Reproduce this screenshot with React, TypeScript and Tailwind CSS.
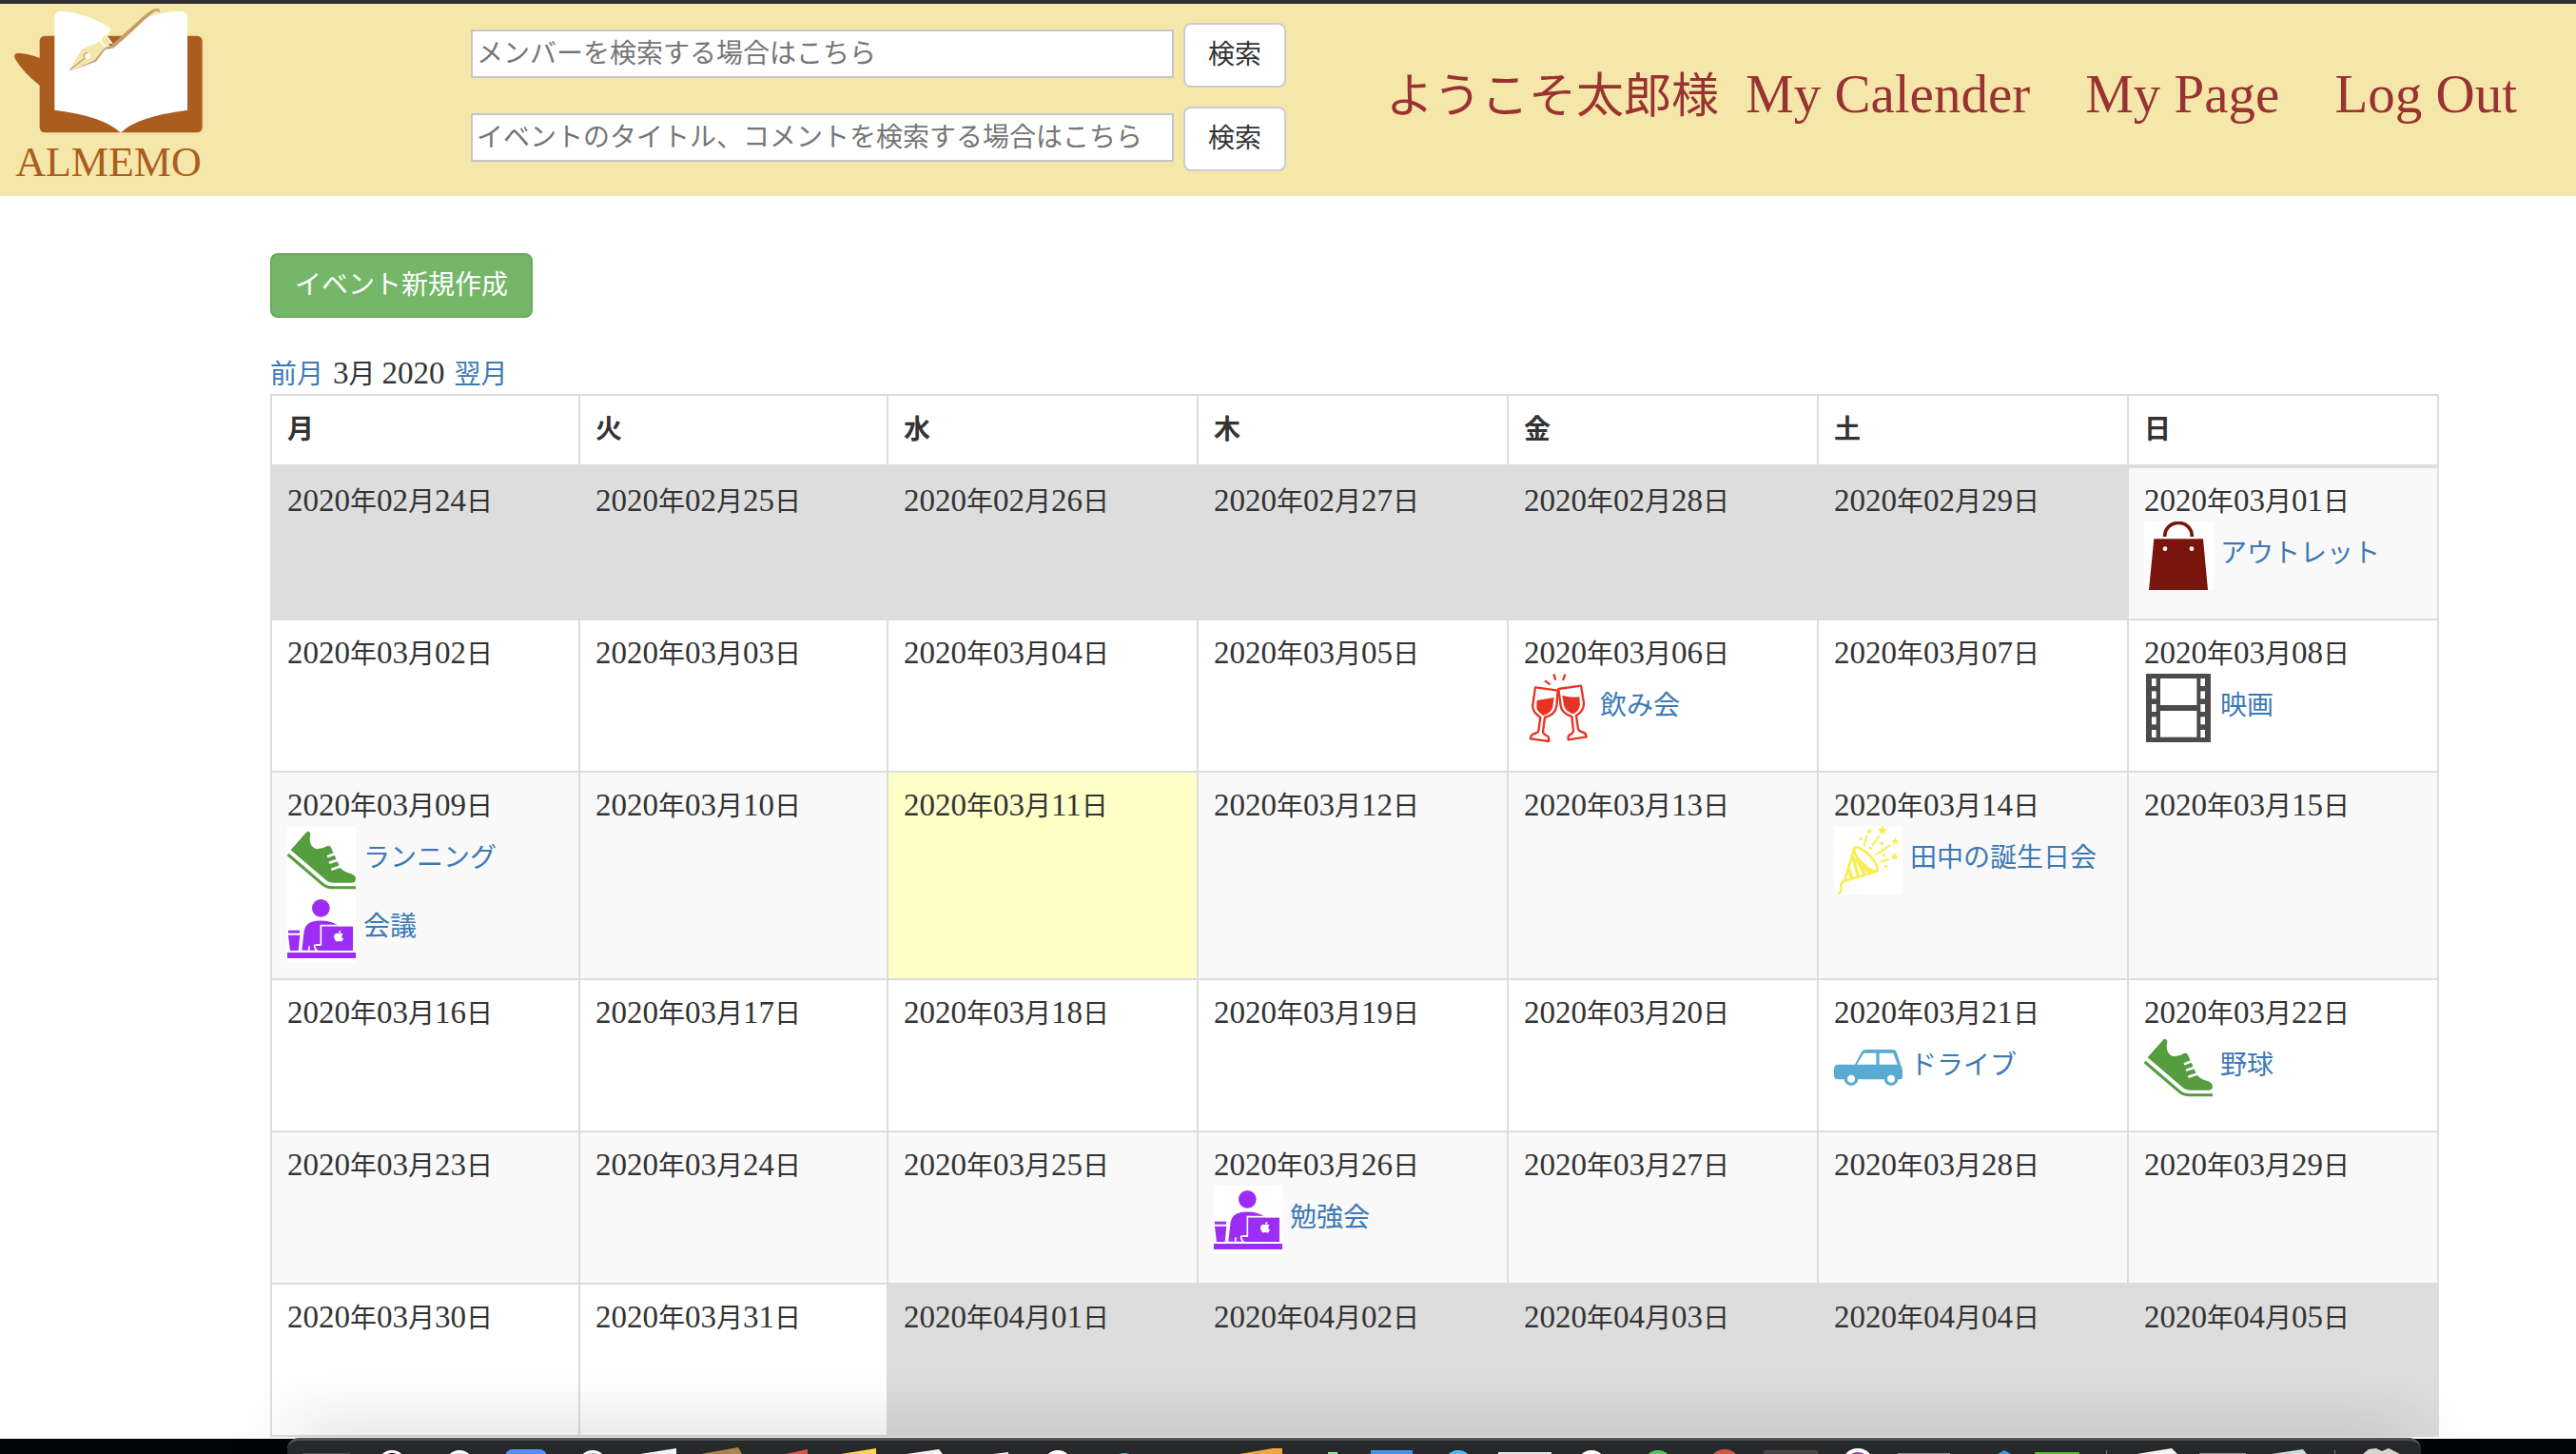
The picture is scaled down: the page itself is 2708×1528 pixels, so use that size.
import React from "react";
import { FaApple } from "react-icons/fa";

type IconName = "bag" | "glasses" | "film" | "shoe" | "meeting" | "party" | "car";
type Event = { icon: IconName; title: string };
type Day = { date: string; tone: "other" | "normal" | "today"; events?: Event[] };

/* Latin letters and digits are set a step larger than the Japanese text around them. */
function Mixed({ text, big = false }: { text: string; big?: boolean }) {
  return (
    <>
      {text.split(/([0-9A-Za-z]+(?: [0-9A-Za-z]+)*)/).map((part, i) =>
        i % 2 === 1 ? (
          <span key={i} className={big ? "text-[57px] leading-none" : "text-[33px] leading-none"}>
            {part}
          </span>
        ) : (
          <React.Fragment key={i}>{part}</React.Fragment>
        )
      )}
    </>
  );
}

const STAR =
  "M0 -10 L2.9 -3.6 L9.5 -3.1 L4.5 1.5 L5.9 8.1 L0 4.6 L-5.9 8.1 L-4.5 1.5 L-9.5 -3.1 L-2.9 -3.6 Z";

function EventIcon({ name }: { name: IconName }) {
  return (
    <svg viewBox="0 0 216 216" className="size-[72px] shrink-0 bg-white" aria-hidden="true">
      {name === "bag" && (
        <>
          <path d="M65 48 C65 -10 151 -10 151 48" fill="none" stroke="#7a150d" strokeWidth="11" />
          <path d="M31 55 H186 L201 216 H15 Z" fill="#7a150d" />
          <circle cx="66" cy="86" r="7" fill="#fff" />
          <circle cx="150" cy="86" r="7" fill="#fff" />
        </>
      )}
      {name === "film" && (
        <>
          <rect x="6" width="204" height="216" fill="#4b4b4b" />
          <rect x="51" y="15" width="115" height="84" fill="#fff" />
          <rect x="51" y="117" width="115" height="83" fill="#fff" />
          {[15, 55, 96, 136, 177].map((y) => (
            <g key={y} fill="#fff">
              <rect x="24" y={y} width="14" height="24" />
              <rect x="178" y={y} width="14" height="24" />
            </g>
          ))}
        </>
      )}
      {name === "glasses" && (
        <g stroke="#e83323" strokeWidth="7" strokeLinejoin="round" fill="none">
          <path d="M36 43 L107 53 L103 103 Q98 130 66 138 L60 183 Q62 192 76 198 Q80 202 78 213 L21 205 Q21 195 28 191 Q43 187 46 181 L52 138 Q24 118 28 97 Z" />
          <path d="M109 48 L180 38 L189 92 Q190 118 165 132 L171 174 Q174 182 188 185 Q196 189 197 199 L140 208 Q138 197 144 193 Q156 187 156 180 L151 135 Q120 125 116 102 Z" />
          <path d="M41 84 L95 75 L91 105 Q86 124 62 132 Q38 118 40 102 Z" fill="#e83323" stroke="none" />
          <path d="M121 68 Q150 77 175 73 L177 98 Q174 118 155 127 Q130 118 126 100 Z" fill="#e83323" stroke="none" />
          <path d="M66 22 L83 34 M94 1 L100 20 M130 2 L123 21" strokeWidth="7" />
        </g>
      )}
      {name === "shoe" && (
        <>
          <path
            d="M11 76 L60 20 Q66 14 72 22 Q74 26 71 38 Q70 62 88 71 Q110 74 126 63 Q132 60 137 66 L166 130 Q174 144 202 151 Q216 156 216 167 Q215 179 202 179 H148 Q130 179 118 167 Z"
            fill="#559d3e"
          />
          <path d="M2 90 L112 184 Q124 194 142 194 H216" fill="none" stroke="#559d3e" strokeWidth="9" />
          <path d="M126 97 L150 88 M132 116 L159 107 M139 137 L170 127" stroke="#fff" strokeWidth="8" />
        </>
      )}
      {name === "meeting" && (
        <>
          <g fill="#9b2df5">
            <circle cx="106" cy="43" r="28" />
            <path d="M46 176 L52 122 Q55 86 92 83 Q135 80 162 98 V176 Z" />
            <rect x="3" y="113" width="36" height="9" />
            <path d="M3 128 H40 L35 177 H9 Z" />
            <rect y="183" width="216" height="18" />
          </g>
          <path d="M68 176 Q68 168 70 163 M105 159 H91 Q84 158 86 165 Q90 177 96 178" fill="none" stroke="#fff" strokeWidth="5" />
          <path d="M109 100 H208 V177 H98 Q91 171 91 163 H109 Z" fill="#9b2df5" />
          <path d="M91 159 H106 V98 H210 V179" fill="none" stroke="#fff" strokeWidth="5" />
          <FaApple x={142} y={111} width={38} height={42} size={40} color="#fff" />
        </>
      )}
      {name === "party" && (
        <g stroke="#f7ef4d" strokeWidth="6" fill="none" strokeLinecap="round">
          <path d="M64 72 L33 173 L130 145" strokeWidth="8" strokeLinejoin="round" />
          <ellipse cx="100" cy="105" rx="50" ry="17" transform="rotate(46 100 105)" strokeWidth="8" />
          <path d="M60 98 L76 160 M72 104 L96 153 M84 125 L116 148 M47 135 L56 164" strokeWidth="10" />
          <path d="M31 175 Q18 180 23 194 Q24 206 15 212" strokeWidth="7" />
          <path d="M95 62 L103 32 M122 60 L141 34 M131 91 L177 61 M148 113 L171 105" />
          <g fill="#f7ef4d" stroke="none">
            <path d={STAR} transform="translate(112 17)" />
            <path d={STAR} transform="translate(153 14) scale(1.6)" />
            <path d={STAR} transform="translate(193 49) scale(1.2)" />
            <path d={STAR} transform="translate(191 97) scale(1.3)" />
            <circle cx="84" cy="41" r="5" />
            <circle cx="115" cy="70" r="5" />
            <circle cx="150" cy="55" r="6" />
            <circle cx="157" cy="93" r="5" />
            <circle cx="163" cy="127" r="5" />
          </g>
        </g>
      )}
      {name === "car" && (
        <>
          <path
            d="M66 98 L86 59 Q90 51 100 51 H185 Q195 51 197 59 L210 98 Q216 108 216 118 V138 Q216 145 209 145 H12 Q0 145 0 133 V112 Q0 98 14 98 Z"
            fill="#5aabd2"
          />
          <path d="M72 98 L91 66 Q93 62 98 62 H133 V98 Z M143 62 H187 L200 98 H143 Z" fill="#fff" />
          <circle cx="54" cy="143" r="22" fill="#5aabd2" />
          <circle cx="180" cy="143" r="22" fill="#5aabd2" />
          <circle cx="54" cy="143" r="12" fill="#fff" />
          <circle cx="180" cy="143" r="12" fill="#fff" />
        </>
      )}
    </svg>
  );
}

function Logo() {
  return (
    <a href="#" aria-label="ALMEMO" className="flex w-[228px] shrink-0 flex-col items-center text-[#ab5d20]">
      <svg viewBox="0 12 684 420" className="h-[140px] w-[228px]" aria-hidden="true">
        <rect x="125" y="113" width="513" height="305" rx="16" fill="#ab5d20" />
        <path d="M127 183 Q88 168 56 167 Q40 169 48 186 Q74 230 127 271 Z" fill="#ab5d20" />
        <path d="M172 54 Q172 36 190 36 C250 38 310 62 351 92 L326 130 L350 146 L448 62 Q510 34 574 36 Q591 37 591 54 V347 Q430 368 383 417 H379 Q325 366 172 347 Z" fill="#fff" />
        <path d="M217 224 L303 194 L332 156 L357 152 C400 118 440 75 476 44 Q498 28 502 40 L505 38 Q504 22 482 30 C440 55 400 105 352 144 L330 148 L297 190 Z" fill="#c4a285" />
        <path d="M352 142 C400 100 440 60 480 34 L484 38 C440 72 400 116 356 146 Z" fill="#c2a05c" />
        <path d="M217 224 L258 155 L314 131 L331 149 L297 190 Z" fill="#f5e7a9" />
        <path d="M319 128 L330 109 L352 134 L334 148 Z" fill="#f5e7a9" />
        <path d="M315 127 L333 150 M333 110 L354 138" stroke="#fff" strokeWidth="4" />
        <path d="M220 220 L272 180" stroke="#a57b68" strokeWidth="3" />
        <circle cx="277" cy="176" r="9" fill="#fff" />
        <path d="M264 180 Q264 166 277 167" fill="none" stroke="#a57b68" strokeWidth="3" />
      </svg>
      <span className="text-[44px] leading-[54px]">ALMEMO</span>
    </a>
  );
}

function SearchRow({ id, label }: { id: string; label: string }) {
  return (
    <form className="flex items-center gap-[10px]" onSubmit={(e) => e.preventDefault()}>
      <input
        id={id}
        type="text"
        aria-label={label}
        placeholder={label}
        className="mb-[3px] h-[51px] w-[739px] border-2 border-[#c6c6c6] bg-white px-1 text-[28px] text-[#333] outline-none placeholder:text-[#757575]"
      />
      <button type="submit" className="h-[68px] rounded-lg border-2 border-[#ccc] bg-white px-6 text-[28px] leading-10 text-[#333]">
        検索
      </button>
    </form>
  );
}

const day = (date: string, tone: Day["tone"] = "normal", ...events: Event[]): Day => ({ date, tone, events });

const WEEKS: Day[][] = [
  [
    day("2020年02月24日", "other"),
    day("2020年02月25日", "other"),
    day("2020年02月26日", "other"),
    day("2020年02月27日", "other"),
    day("2020年02月28日", "other"),
    day("2020年02月29日", "other"),
    day("2020年03月01日", "normal", { icon: "bag", title: "アウトレット" }),
  ],
  [
    day("2020年03月02日"),
    day("2020年03月03日"),
    day("2020年03月04日"),
    day("2020年03月05日"),
    day("2020年03月06日", "normal", { icon: "glasses", title: "飲み会" }),
    day("2020年03月07日"),
    day("2020年03月08日", "normal", { icon: "film", title: "映画" }),
  ],
  [
    day("2020年03月09日", "normal", { icon: "shoe", title: "ランニング" }, { icon: "meeting", title: "会議" }),
    day("2020年03月10日"),
    day("2020年03月11日", "today"),
    day("2020年03月12日"),
    day("2020年03月13日"),
    day("2020年03月14日", "normal", { icon: "party", title: "田中の誕生日会" }),
    day("2020年03月15日"),
  ],
  [
    day("2020年03月16日"),
    day("2020年03月17日"),
    day("2020年03月18日"),
    day("2020年03月19日"),
    day("2020年03月20日"),
    day("2020年03月21日", "normal", { icon: "car", title: "ドライブ" }),
    day("2020年03月22日", "normal", { icon: "shoe", title: "野球" }),
  ],
  [
    day("2020年03月23日"),
    day("2020年03月24日"),
    day("2020年03月25日"),
    day("2020年03月26日", "normal", { icon: "meeting", title: "勉強会" }),
    day("2020年03月27日"),
    day("2020年03月28日"),
    day("2020年03月29日"),
  ],
  [
    day("2020年03月30日"),
    day("2020年03月31日"),
    day("2020年04月01日", "other"),
    day("2020年04月02日", "other"),
    day("2020年04月03日", "other"),
    day("2020年04月04日", "other"),
    day("2020年04月05日", "other"),
  ],
];

const TONES = { other: "bg-[#ddd]", normal: "", today: "bg-[#ffffc8]" };

function Calendar() {
  return (
    <table className="w-full table-fixed border-collapse">
      <colgroup>
        <col span={2} className="w-[324px]" />
        <col span={5} />
      </colgroup>
      <thead>
        <tr>
          {["月", "火", "水", "木", "金", "土", "日"].map((d) => (
            <th
              key={d}
              scope="col"
              className="border-2 border-b-4 border-[#ddd] p-4 text-left font-bold leading-10"
            >
              {d}
            </th>
          ))}
        </tr>
      </thead>
      <tbody>
        {WEEKS.map((week, w) => (
          <tr key={week[0].date} className="odd:bg-[#f9f9f9]">
            {week.map((d) => (
              <td
                key={d.date}
                className={`border-2 border-[#ddd] p-4 align-top ${w === 0 ? "h-[161px]" : "h-40"} ${TONES[d.tone]}`}
              >
                <div className="h-10 leading-10">
                  <Mixed text={d.date} />
                </div>
                {d.events?.map((e) => (
                  <div key={e.title} className="flex items-center gap-2">
                    <EventIcon name={e.icon} />
                    <a href="#" className="pb-1 leading-10 text-[#3d79b6]">
                      {e.title}
                    </a>
                  </div>
                ))}
              </td>
            ))}
          </tr>
        ))}
      </tbody>
    </table>
  );
}

/* Tops of the dock's icons, which peek over the lower edge of the screen. */
function Dock() {
  return (
    <div className="fixed inset-x-0 bottom-0 h-4 bg-[#020506] pr-[163px] pl-[302px]" aria-hidden="true">
      <div className="-mt-px h-[17px] overflow-visible rounded-t-xl border-t-3 border-[#505253] bg-[#262829] shadow-[0_0_70px_rgba(0,0,0,0.38)]">
        <svg viewBox="302 1514 2243 14" className="h-[14px] w-[2243px]">
          <rect x="318" y="1527" width="50" height="2" fill="#44535c" />
          <circle cx="412" cy="1539" r="15" fill="#fff" />
          <circle cx="412" cy="1539" r="12" fill="#2b1230" />
          <circle cx="483" cy="1539" r="15" fill="#fff" />
          <circle cx="483" cy="1539" r="12" fill="#cfe0e6" />
          <rect x="531" y="1523" width="44" height="20" rx="8" fill="#5290f5" />
          <circle cx="623" cy="1539" r="15" fill="#fff" />
          <circle cx="623" cy="1539" r="12" fill="#78b8f2" />
          <path d="M673 1528 L711 1522 V1528 Z" fill="#f2f4f8" />
          <path d="M737 1528 L776 1521 L780 1528 Z" fill="#a98549" />
          <path d="M826 1528 L849 1523 V1528 Z" fill="#d9534a" />
          <path d="M884 1528 L921 1522 V1528 Z" fill="#f8d552" />
          <path d="M953 1528 L987 1523 L991 1528 Z" fill="#f4f4f4" />
          <path d="M1044 1528 L1060 1526 V1528 Z" fill="#eee" />
          <circle cx="1112" cy="1539" r="15" fill="#fff" />
          <circle cx="1182" cy="1541" r="14" fill="#5db4dc" />
          <path d="M1303 1528 L1338 1522 H1348 V1528 Z" fill="#f0a53c" />
          <rect x="1396" y="1526" width="10" height="4" fill="#8ce79a" />
          <rect x="1441" y="1524" width="44" height="6" fill="#3f93ec" />
          <circle cx="1533" cy="1539" r="15" fill="#54b6f2" />
          <rect x="1575" y="1526" width="56" height="4" fill="#dfe6f2" />
          <circle cx="1673" cy="1539" r="15" fill="#fff" />
          <circle cx="1743" cy="1539" r="15" fill="#55c65d" />
          <circle cx="1813" cy="1540" r="17" fill="#cf5647" />
          <rect x="1854" y="1524" width="57" height="6" rx="2" fill="#474747" />
          <circle cx="1953" cy="1539" r="17" fill="#fff" />
          <circle cx="1953" cy="1539" r="13" fill="#8c4aa3" />
          <rect x="1995" y="1527" width="55" height="2" fill="#8b8d8f" />
          <path d="M2100 1528 L2107 1524 L2114 1528 Z" fill="#3c9be0" />
          <rect x="2139" y="1526" width="47" height="4" rx="1" fill="#53c22d" />
          <rect x="2214" y="1524" width="1" height="4" fill="#77797a" />
          <path d="M2246 1528 L2283 1522 L2289 1528 Z" fill="#f5f5f5" />
          <rect x="2312" y="1527" width="49" height="2" fill="#909294" />
          <path d="M2388 1528 L2421 1523 L2425 1528 Z" fill="#cddbe1" />
          <rect x="2454" y="1524" width="1" height="4" fill="#77797a" />
          <path d="M2484 1528 L2490 1523 L2498 1522 L2504 1525 L2511 1522 L2517 1525 L2523 1528 Z" fill="#d5d5d0" />
        </svg>
      </div>
    </div>
  );
}

export default function App() {
  return (
    <div className="min-h-screen overflow-hidden bg-white font-['Liberation_Serif','Noto_Sans_CJK_JP',serif] text-[28px] leading-10 text-[#333]">
      <header className="flex h-[206px] items-start border-t-4 border-[#2d2d31] bg-[#f5e7a9]">
        <Logo />
        <div className="ml-[267px] flex flex-col gap-5 pt-5">
          <SearchRow id="member-search" label="メンバーを検索する場合はこちら" />
          <SearchRow id="event-search" label="イベントのタイトル、コメントを検索する場合はこちら" />
        </div>
        <nav className="mt-[59px] mr-[62px] ml-auto flex items-baseline text-[50px] leading-[76px] whitespace-nowrap text-[#993333]">
          <span className="mr-7">ようこそ太郎様</span>
          <div className="flex gap-[58px]">
            {["My Calender", "My Page", "Log Out"].map((item) => (
              <a key={item} href="#">
                <Mixed text={item} big />
              </a>
            ))}
          </div>
        </nav>
      </header>

      <main className="flex flex-col items-start pt-[60px] pr-[144px] pb-4 pl-[284px]">
        <button type="button" className="h-[68px] rounded-lg border-2 border-[#68a95c] bg-[#75b768] px-6 text-white">
          イベント新規作成
        </button>
        <div className="mt-10 flex h-10 items-baseline gap-[10px]">
          <a href="#" className="text-[#3d79b6]">
            前月
          </a>
          <span>
            <Mixed text="3月 2020" />
          </span>
          <a href="#" className="text-[#3d79b6]">
            翌月
          </a>
        </div>
        <Calendar />
      </main>
      <Dock />
    </div>
  );
}
